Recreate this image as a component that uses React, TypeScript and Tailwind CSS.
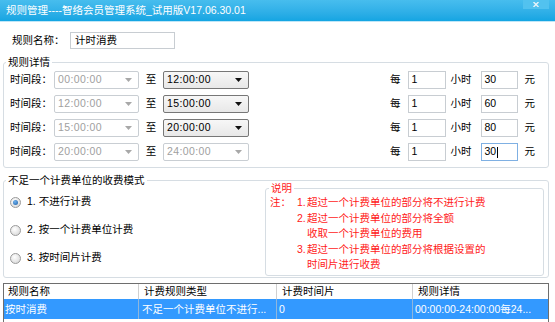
import clsx from 'clsx'

const rows = [
  { from: '00:00:00', to: '12:00:00', toDisabled: false, price: '30' },
  { from: '12:00:00', to: '15:00:00', toDisabled: false, price: '60' },
  { from: '15:00:00', to: '20:00:00', toDisabled: false, price: '80' },
  { from: '20:00:00', to: '24:00:00', toDisabled: true, price: '30' },
]

const TimeSelect = ({ value, disabled }: { value: string; disabled?: boolean }) => (
  <div
    className={clsx(
      'flex h-[18px] items-center rounded-[2px] border pl-[3px] pr-[6px]',
      disabled
        ? 'border-[#c9ced3] bg-white text-[#a0a0a0]'
        : 'border-[#777777] bg-linear-to-b from-[#f7f7f7] to-[#e8e8e8] text-black',
    )}
  >
    <span className="flex-1 tracking-[0.4px]">{value}</span>
    <svg width="7" height="4" viewBox="0 0 7 4">
      <path d="M0 0h7L3.5 4z" fill={disabled ? '#a8a8a8' : '#111111'} />
    </svg>
  </div>
)

const TextBox = ({ value, className, focused }: { value: string; className?: string; focused?: boolean }) => (
  <div
    className={clsx(
      'flex items-center border bg-white pl-[3px]',
      focused ? 'border-[#7fb0e3]' : 'border-[#c8cdd2]',
      className,
    )}
  >
    {value}
    {focused && <span className="ml-[1px] h-[11px] w-[1px] bg-black" />}
  </div>
)

const Radio = ({ checked }: { checked?: boolean }) => (
  <span className="flex h-[11px] w-[11px] items-center justify-center rounded-full border border-[#9a9a9a] bg-[radial-gradient(circle_at_40%_35%,#ffffff,#d2d2d2)]">
    {checked && (
      <span className="h-[5px] w-[5px] rounded-full bg-[radial-gradient(circle_at_40%_35%,#6fb2ef,#1d5fa6)]" />
    )}
  </span>
)

export default function App() {
  return (
    <div className="h-[322px] w-[555px] overflow-hidden bg-white text-[10.5px] text-black font-['Liberation_Sans','Noto_Sans_CJK_SC',sans-serif]">
      {/* title bar */}
      <div className="flex h-[21px] items-center bg-linear-to-b from-[#47bdee] to-[#13a5e2] pl-[6px] text-white">
        <span>规则管理----智络会员管理系统_试用版V17.06.30.01</span>
        <div className="ml-auto mr-[6px] flex h-[9px] w-[26px] items-center justify-center self-start bg-[#52c2ef]">
          <svg width="6" height="5" viewBox="0 0 6 5">
            <path d="M0.5 0L5.5 5M5.5 0L0.5 5" stroke="#e6f3f9" strokeWidth="1.4" />
          </svg>
        </div>
      </div>
      <div className="h-[1px] bg-[#bfe6f7]" />

      <div className="ml-[3px] w-[546px]">
        <div className="mt-[10px] flex h-[17px] items-center">
          <span className="w-[67px] pl-[9px]">规则名称：</span>
          <TextBox value="计时消费" className="h-[17px] w-[105px] pl-[4px]" />
        </div>

        <fieldset className="mt-[6px] rounded-[3px] border border-[#d6dde3]">
          <legend className="ml-[2px] px-[2px] leading-[14px]">规则详情</legend>
          <div className="flex flex-col gap-[6px] pt-[2px] pb-[6px] pl-[6px]">
            {rows.map((r) => (
              <div key={r.from} className="flex h-[18px] items-center">
                <span className="w-[44px]">时间段：</span>
                <div className="w-[85px]">
                  <TimeSelect value={r.from} disabled />
                </div>
                <span className="w-[24px] text-center">至</span>
                <div className="w-[86px]">
                  <TimeSelect value={r.to} disabled={r.toDisabled} />
                </div>
                <span className="ml-[141px]">每</span>
                <TextBox value="1" className="ml-[7px] h-[18px] w-[38px]" />
                <span className="ml-[5px]">小时</span>
                <TextBox
                  value={r.price}
                  focused={r.toDisabled}
                  className="ml-[9px] h-[18px] w-[37px]"
                />
                <span className="ml-[7px]">元</span>
              </div>
            ))}
          </div>
        </fieldset>

        <fieldset className="mt-[5px] rounded-[3px] border border-[#d6dde3]">
          <legend className="ml-[2px] px-[2px] leading-[14px]">不足一个计费单位的收费模式</legend>
          <div className="flex">
            <div className="flex flex-col gap-[14px] pt-[8px] pl-[6px]">
              <label className="flex h-[14px] items-center gap-[6px]">
                <Radio checked />
                1. 不进行计费
              </label>
              <label className="flex h-[14px] items-center gap-[6px]">
                <Radio />
                2. 按一个计费单位计费
              </label>
              <label className="flex h-[14px] items-center gap-[6px]">
                <Radio />
                3. 按时间片计费
              </label>
            </div>

            <fieldset className="mr-[4px] mb-[1px] ml-auto -mt-[6px] h-[95px] w-[279px] rounded-[3px] border border-[#d6dde3] text-[#ff1a1a]">
              <legend className="ml-[3px] px-[2px] leading-[14px]">说明</legend>
              <div className="flex pl-[4px] leading-[15.5px]">
                <span className="w-[27px]">注：</span>
                <div className="flex flex-col">
                  <div className="flex">
                    <span className="w-[10px]">1.</span>
                    <span>超过一个计费单位的部分将不进行计费</span>
                  </div>
                  <div className="flex">
                    <span className="w-[10px]">2.</span>
                    <span>
                      超过一个计费单位的部分将全额
                      <br />
                      收取一个计费单位的费用
                    </span>
                  </div>
                  <div className="flex">
                    <span className="w-[10px]">3.</span>
                    <span>
                      超过一个计费单位的部分将根据设置的
                      <br />
                      时间片进行收费
                    </span>
                  </div>
                </div>
              </div>
            </fieldset>
          </div>
        </fieldset>

        {/* rule list */}
        <div className="mt-[5px] h-[60px] border border-[#6e6e6e]">
          <div className="grid h-[15px] grid-cols-[135px_138px_136px_1fr] items-center leading-[15px]">
            <div className="border-r border-[#d0d0d0] pl-[4px]">规则名称</div>
            <div className="border-r border-[#d0d0d0] pl-[5px]">计费规则类型</div>
            <div className="border-r border-[#d0d0d0] pl-[5px]">计费时间片</div>
            <div className="pl-[5px]">规则详情</div>
          </div>
          <div className="grid h-[20px] grid-cols-[135px_138px_136px_1fr] items-center bg-[#3399ff] leading-[20px] text-white">
            <div className="border-r border-[#8fb6dc] pl-[1px]">按时消费</div>
            <div className="border-r border-[#8fb6dc] pl-[3px] whitespace-nowrap">不足一个计费单位不进行...</div>
            <div className="border-r border-[#8fb6dc] pl-[2px]">0</div>
            <div className="overflow-hidden pl-[2px] whitespace-nowrap">00:00:00-24:00:00每24...</div>
          </div>
        </div>
      </div>
    </div>
  )
}
